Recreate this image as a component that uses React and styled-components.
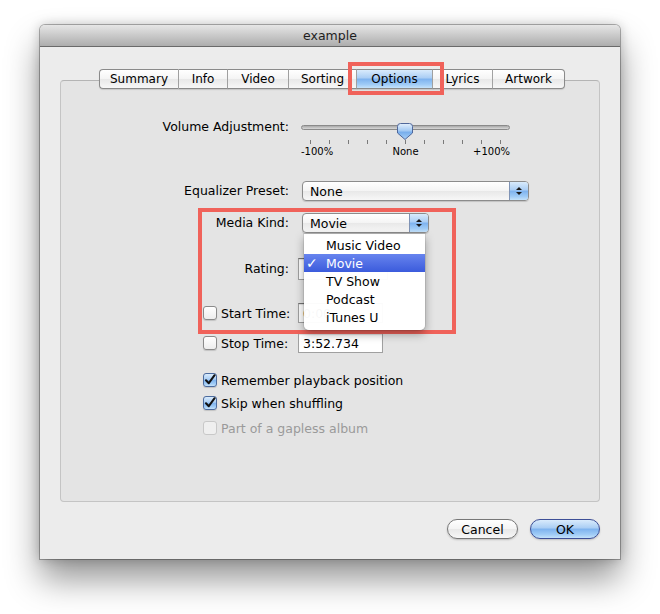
import React from 'react';
import styled, { createGlobalStyle } from 'styled-components';

const GlobalStyle = createGlobalStyle`
  html, body {
    margin: 0;
    padding: 0;
    background: #ffffff;
  }
  body {
    font-family: "DejaVu Sans", "Liberation Sans", sans-serif;
    font-size: 12.5px;
    color: #000;
  }
`;

const aqua = 'linear-gradient(#d9ebfc 0%, #a9cdf4 45%, #7db2ee 50%, #9fcbf6 80%, #c4e2fb 100%)';
const glass = 'linear-gradient(#ffffff 0%, #f4f4f4 50%, #e8e8e8 51%, #f7f7f7 100%)';

const Page = styled.div`
  width: 660px;
  height: 614px;
  padding: 25px 0 0 40px;
  box-sizing: border-box;
  overflow: hidden;
`;

const Window = styled.div`
  width: 580px;
  height: 534px;
  display: flex;
  flex-direction: column;
  background: #ececec;
  border-radius: 5px 5px 0 0;
  box-shadow: 0 20px 34px rgba(0, 0, 0, 0.42), 0 0 12px rgba(0, 0, 0, 0.22),
    0 0 0 1px rgba(0, 0, 0, 0.28);
`;

const TitleBar = styled.div`
  height: 22px;
  box-sizing: border-box;
  display: flex;
  align-items: center;
  justify-content: center;
  border-radius: 5px 5px 0 0;
  border-bottom: 1px solid #6a6a6a;
  background: linear-gradient(#e6e6e6, #c9c9c9 50%, #adadad);
  color: #1e1e1e;
  font-size: 12.5px;
`;

const Body = styled.div`
  flex: 1;
  display: flex;
  flex-direction: column;
  padding: 22px 20px 20px;
`;

const TabBar = styled.div`
  display: flex;
  align-self: flex-start;
  margin-left: 39px;
  margin-bottom: -9px;
  position: relative;
  z-index: 1;
`;

const Tab = styled.div`
  position: relative;
  width: ${p => p.$width}px;
  height: 20px;
  box-sizing: border-box;
  display: flex;
  align-items: center;
  justify-content: center;
  border-top: 1px solid #8a8a8a;
  border-bottom: 1px solid #8a8a8a;
  border-right: 1px solid ${p => (p.$last ? '#8a8a8a' : '#a4a4a4')};
  border-left: ${p => (p.$first ? '1px solid #8a8a8a' : 'none')};
  border-radius: ${p => (p.$first ? '4px 0 0 4px' : p.$last ? '0 4px 4px 0' : '0')};
  background: ${p => (p.$active ? aqua : glass)};
  box-shadow: 0 1px 1px rgba(0, 0, 0, 0.12);
  font-size: 12px;
`;

const Annotation = styled.div`
  position: absolute;
  left: ${p => p.$left}px;
  top: ${p => p.$top}px;
  width: ${p => p.$width}px;
  height: ${p => p.$height}px;
  box-sizing: border-box;
  border: 4px solid #f0625a;
  z-index: ${p => p.$z || 2};
  pointer-events: none;
`;

const Panel = styled.div`
  position: relative;
  height: 422px;
  box-sizing: border-box;
  padding-top: 36px;
  border: 1px solid #c4c4c4;
  border-top-color: #b4b4b4;
  border-radius: 4px;
  background: #e4e4e4;
`;

const Row = styled.div`
  display: flex;
  align-items: ${p => p.$align || 'center'};
  height: ${p => p.$height || 20}px;
  margin-top: ${p => p.$gap || 0}px;
`;

const Label = styled.div`
  width: 228px;
  flex-shrink: 0;
  text-align: right;
  line-height: 20px;
  white-space: nowrap;
  color: ${p => (p.$disabled ? '#9a9a9a' : '#000')};
`;

const CheckCell = styled.label`
  width: ${p => (p.$wide ? 'auto' : '228px')};
  flex-shrink: 0;
  padding-left: 142px;
  box-sizing: border-box;
  display: flex;
  align-items: center;
  gap: 4px;
  white-space: nowrap;
  color: ${p => (p.$disabled ? '#9a9a9a' : '#000')};
`;

const Box = styled.span`
  width: 14px;
  height: 14px;
  box-sizing: border-box;
  flex-shrink: 0;
  display: flex;
  align-items: center;
  justify-content: center;
  border-radius: 3px;
  border: 1px solid ${p => (p.$disabled ? '#c8c8c8' : p.$checked ? '#4c6b9e' : '#8a8a8a')};
  background: ${p =>
    p.$disabled ? '#efefef' : p.$checked ? aqua : 'linear-gradient(#ffffff, #ededed)'};
  box-shadow: ${p => (p.$disabled ? 'none' : '0 1px 1px rgba(0,0,0,0.15)')};
`;

function Checkbox({ checked, disabled }) {
  return (
    <Box $checked={checked} $disabled={disabled}>
      {checked && (
        <svg width="12" height="12" viewBox="0 0 12 12">
          <path d="M2 6.2 L4.8 9.2 L10.6 1.2" fill="none" stroke="#111" strokeWidth="2" strokeLinecap="round" strokeLinejoin="round" />
        </svg>
      )}
    </Box>
  );
}

/* slider */
const Slider = styled.div`
  width: 209px;
  margin-left: 12px;
  display: flex;
  flex-direction: column;
`;

const TrackArea = styled.div`
  position: relative;
  height: 20px;
`;

const Track = styled.div`
  margin-top: 8px;
  height: 5px;
  box-sizing: border-box;
  border-radius: 3px;
  border: 1px solid #8a8a8a;
  background: linear-gradient(#a9a9a9, #d8d8d8);
`;

const Thumb = styled.svg`
  position: absolute;
  left: 96px;
  top: 6px;
`;

const Ticks = styled.div`
  display: flex;
  justify-content: space-between;
  margin-top: 3px;
  padding: 0 9px;
  height: 4px;
`;

const Tick = styled.span`
  width: 1px;
  background: #7a7a7a;
`;

const TickLabels = styled.div`
  display: grid;
  grid-template-columns: 1fr auto 1fr;
  margin-top: 2px;
  font-size: 10px;
  line-height: 12px;
  span:first-child { justify-self: start; }
  span:last-child { justify-self: end; }
`;

/* popup button */
const Popup = styled.div`
  position: relative;
  width: ${p => p.$width}px;
  height: 20px;
  margin-left: 13px;
  box-sizing: border-box;
  display: flex;
  align-items: center;
  border: 1px solid #8c8c8c;
  border-radius: 4px;
  background: ${glass};
  box-shadow: 0 1px 1px rgba(0, 0, 0, 0.15);
`;

const PopupText = styled.span`
  flex: 1;
  padding-left: 7px;
`;

const PopupArrows = styled.span`
  align-self: stretch;
  width: 18px;
  display: flex;
  flex-direction: column;
  align-items: center;
  justify-content: center;
  gap: 2px;
  border-left: 1px solid #7f93b5;
  border-radius: 0 3px 3px 0;
  background: ${aqua};
`;

const Arrow = styled.span`
  width: 0;
  height: 0;
  border-left: 3px solid transparent;
  border-right: 3px solid transparent;
  ${p => (p.$up ? 'border-bottom: 3px solid #1a1a1a;' : 'border-top: 3px solid #1a1a1a;')}
`;

const TextField = styled.div`
  width: ${p => p.$width || 85}px;
  height: ${p => p.$height || 20}px;
  margin-left: 9px;
  box-sizing: border-box;
  display: flex;
  align-items: center;
  padding-left: 4px;
  background: #fff;
  border: 1px solid #a0a0a0;
  border-top-color: #727272;
  box-shadow: inset 0 1px 1px rgba(0, 0, 0, 0.12);
`;

/* open menu */
const Menu = styled.div`
  position: absolute;
  left: 1px;
  top: 20px;
  width: 121px;
  padding: 2px 0 4px;
  background: rgba(255, 255, 255, 0.97);
  border-radius: 0 0 5px 5px;
  box-shadow: 0 4px 10px rgba(0, 0, 0, 0.35), 0 0 0 1px rgba(0, 0, 0, 0.08);
  z-index: 3;
`;

const MenuItem = styled.div`
  display: flex;
  align-items: center;
  height: 18px;
  color: ${p => (p.$selected ? '#fff' : '#000')};
  background: ${p => (p.$selected ? 'linear-gradient(#6784ee, #3b5bdc)' : 'transparent')};
`;

const CheckSlot = styled.span`
  width: 22px;
  padding-left: 2px;
  box-sizing: border-box;
  font-weight: bold;
  font-size: 14px;
  line-height: 18px;
`;

const Footer = styled.div`
  display: flex;
  justify-content: flex-end;
  gap: 12px;
  margin-top: 17px;
`;

const PushButton = styled.button`
  width: ${p => p.$width}px;
  height: 20px;
  padding: 0;
  box-sizing: border-box;
  border-radius: 10px;
  border: 1px solid ${p => (p.$default ? '#3d4f97' : '#777')};
  background: ${p => (p.$default ? aqua : glass)};
  box-shadow: 0 1px 2px rgba(0, 0, 0, 0.2);
  font-family: "DejaVu Sans", sans-serif;
  font-size: 12.5px;
  color: #000;
`;

const tabs = [
  { name: 'Summary', width: 80 },
  { name: 'Info', width: 49 },
  { name: 'Video', width: 61 },
  { name: 'Sorting', width: 68 },
  { name: 'Options', width: 76 },
  { name: 'Lyrics', width: 60 },
  { name: 'Artwork', width: 72 },
];

const mediaKinds = ['Music Video', 'Movie', 'TV Show', 'Podcast', 'iTunes U'];

export default function App() {
  return (
    <Page>
      <GlobalStyle />
      <Window>
        <TitleBar>example</TitleBar>
        <Body>
          <TabBar>
            {tabs.map((t, i) => (
              <Tab
                key={t.name}
                $width={t.width}
                $first={i === 0}
                $last={i === tabs.length - 1}
                $active={t.name === 'Options'}
              >
                {t.name}
                {t.name === 'Options' && (
                  <Annotation $left={-9} $top={-8} $width={96} $height={33} />
                )}
              </Tab>
            ))}
          </TabBar>

          <Panel>
            <Row $align="flex-start" $height={41}>
              <Label>Volume Adjustment:</Label>
              <Slider>
                <TrackArea>
                  <Track />
                  <Thumb width="16" height="17" viewBox="0 0 16 17">
                    <defs>
                      <linearGradient id="thumb" x1="0" y1="0" x2="0" y2="1">
                        <stop offset="0" stopColor="#e4f0fc" />
                        <stop offset="0.45" stopColor="#a3c9f3" />
                        <stop offset="0.55" stopColor="#78aeec" />
                        <stop offset="1" stopColor="#a8d0f7" />
                      </linearGradient>
                    </defs>
                    <path
                      d="M0.5 3.5 Q0.5 0.5 3.5 0.5 L12.5 0.5 Q15.5 0.5 15.5 3.5 L15.5 10 L8 16.5 L0.5 10 Z"
                      fill="url(#thumb)"
                      stroke="#50679a"
                    />
                  </Thumb>
                </TrackArea>
                <Ticks>
                  {Array.from({ length: 11 }).map((_, i) => (
                    <Tick key={i} />
                  ))}
                </Ticks>
                <TickLabels>
                  <span>-100%</span>
                  <span>None</span>
                  <span>+100%</span>
                </TickLabels>
              </Slider>
            </Row>

            <Row $gap={23}>
              <Label>Equalizer Preset:</Label>
              <Popup $width={227}>
                <PopupText>None</PopupText>
                <PopupArrows>
                  <Arrow $up />
                  <Arrow />
                </PopupArrows>
              </Popup>
            </Row>

            <Row $gap={12}>
              <Label>Media Kind:</Label>
              <Popup $width={127}>
                <PopupText>Movie</PopupText>
                <PopupArrows>
                  <Arrow $up />
                  <Arrow />
                </PopupArrows>
                <Menu>
                  {mediaKinds.map(kind => (
                    <MenuItem key={kind} $selected={kind === 'Movie'}>
                      <CheckSlot>{kind === 'Movie' ? '✓' : ''}</CheckSlot>
                      {kind}
                    </MenuItem>
                  ))}
                </Menu>
              </Popup>
            </Row>

            <Row $gap={25} $height={22}>
              <Label>Rating:</Label>
              <TextField $width={90} $height={22} />
            </Row>

            <Row $gap={23}>
              <CheckCell>
                <Checkbox />
                Start Time:
              </CheckCell>
              <TextField>0:00</TextField>
            </Row>

            <Row $gap={10}>
              <CheckCell>
                <Checkbox />
                Stop Time:
              </CheckCell>
              <TextField>3:52.734</TextField>
            </Row>

            <Row $gap={18} $height={18}>
              <CheckCell $wide>
                <Checkbox checked />
                Remember playback position
              </CheckCell>
            </Row>
            <Row $gap={5} $height={18}>
              <CheckCell $wide>
                <Checkbox checked />
                Skip when shuffling
              </CheckCell>
            </Row>
            <Row $gap={7} $height={18}>
              <CheckCell $wide $disabled>
                <Checkbox disabled />
                Part of a gapless album
              </CheckCell>
            </Row>

            <Annotation $left={137} $top={127} $width={258} $height={126} />
          </Panel>

          <Footer>
            <PushButton $width={71}>Cancel</PushButton>
            <PushButton $width={70} $default>
              OK
            </PushButton>
          </Footer>
        </Body>
      </Window>
    </Page>
  );
}
